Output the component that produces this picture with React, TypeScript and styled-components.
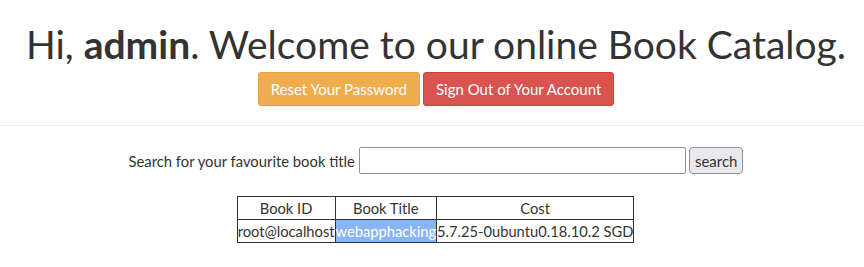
import React from "react";
import styled, { createGlobalStyle } from "styled-components";

const GlobalStyle = createGlobalStyle`
  html, body {
    margin: 0;
    padding: 0;
    background: #ffffff;
  }
  body {
    font-family: Lato, "Liberation Sans", sans-serif;
    font-size: 15px;
    color: #333333;
  }
`;

const Page = styled.div`
  display: flex;
  flex-direction: column;
  align-items: stretch;
`;

const Header = styled.header`
  display: flex;
  flex-direction: column;
  align-items: center;
  padding-top: 20px;
  padding-left: 8px;
`;

const Title = styled.h1`
  margin: 0;
  font-size: 39px;
  line-height: 48px;
  font-weight: 400;
  color: #333333;
  white-space: nowrap;
  b {
    font-weight: 700;
  }
`;

const Actions = styled.div`
  display: flex;
  gap: 3px;
  margin-top: 4px;
`;

const ActionButton = styled.button<{ $tone: "warning" | "danger" }>`
  font-family: inherit;
  font-size: 15px;
  line-height: 20px;
  padding: 6px 12px;
  height: 34px;
  border-radius: 3px;
  border: 1px solid ${(p) => (p.$tone === "warning" ? "#eea236" : "#d43f3a")};
  background: ${(p) => (p.$tone === "warning" ? "#f0ad4e" : "#d9534f")};
  color: #ffffff;
  cursor: pointer;
`;

const Rule = styled.hr`
  margin: 19px 0 0;
  border: 0;
  border-top: 1px solid #eeeeee;
  width: 100%;
`;

const SearchForm = styled.form`
  display: flex;
  justify-content: center;
  align-items: center;
  gap: 3px;
  margin-top: 21px;
  padding-left: 8px;
`;

const SearchLabel = styled.label`
  font-size: 14.8px;
  margin-right: 1px;
`;

const SearchInput = styled.input`
  width: 327px;
  height: 27px;
  box-sizing: border-box;
  border: 1px solid #8f8f9d;
  border-radius: 2px;
  padding: 2px 4px;
  font-family: inherit;
  font-size: 15px;
`;

const SearchButton = styled.button`
  height: 27px;
  box-sizing: border-box;
  padding: 0 5px;
  border: 1px solid #8f8f9d;
  border-radius: 4px;
  background: #e9e9ed;
  font-family: inherit;
  font-size: 15px;
  color: #333333;
`;

const TableWrap = styled.div`
  display: flex;
  justify-content: center;
  margin-top: 22px;
  padding-left: 7px;
`;

const Table = styled.table`
  border-collapse: collapse;
  border: 1px solid #333;
  font-size: 14.7px;
`;

const Th = styled.th`
  border: 1px solid #333;
  font-weight: 400;
  padding: 0;
  height: 22px;
  line-height: 20px;
  text-align: center;
  white-space: nowrap;
`;

const Td = styled.td<{ $selected?: boolean }>`
  border: 1px solid #333;
  padding: 0;
  height: 22px;
  line-height: 20px;
  white-space: nowrap;
  background: ${(p) => (p.$selected ? "#8ab4f8" : "transparent")};
  color: ${(p) => (p.$selected ? "#ffffff" : "#333333")};
`;

export default function App() {
  return (
    <Page>
      <GlobalStyle />
      <Header>
        <Title>
          Hi, <b>admin</b>. Welcome to our online Book Catalog.
        </Title>
        <Actions>
          <ActionButton $tone="warning">Reset Your Password</ActionButton>
          <ActionButton $tone="danger">Sign Out of Your Account</ActionButton>
        </Actions>
      </Header>
      <Rule />
      <SearchForm onSubmit={(e) => e.preventDefault()}>
        <SearchLabel htmlFor="q">Search for your favourite book title</SearchLabel>
        <SearchInput id="q" type="text" />
        <SearchButton type="submit">search</SearchButton>
      </SearchForm>
      <TableWrap>
        <Table>
          <thead>
            <tr>
              <Th>Book ID</Th>
              <Th>Book Title</Th>
              <Th>Cost</Th>
            </tr>
          </thead>
          <tbody>
            <tr>
              <Td>root@localhost</Td>
              <Td $selected>webapphacking</Td>
              <Td>5.7.25-0ubuntu0.18.10.2 SGD</Td>
            </tr>
          </tbody>
        </Table>
      </TableWrap>
    </Page>
  );
}
